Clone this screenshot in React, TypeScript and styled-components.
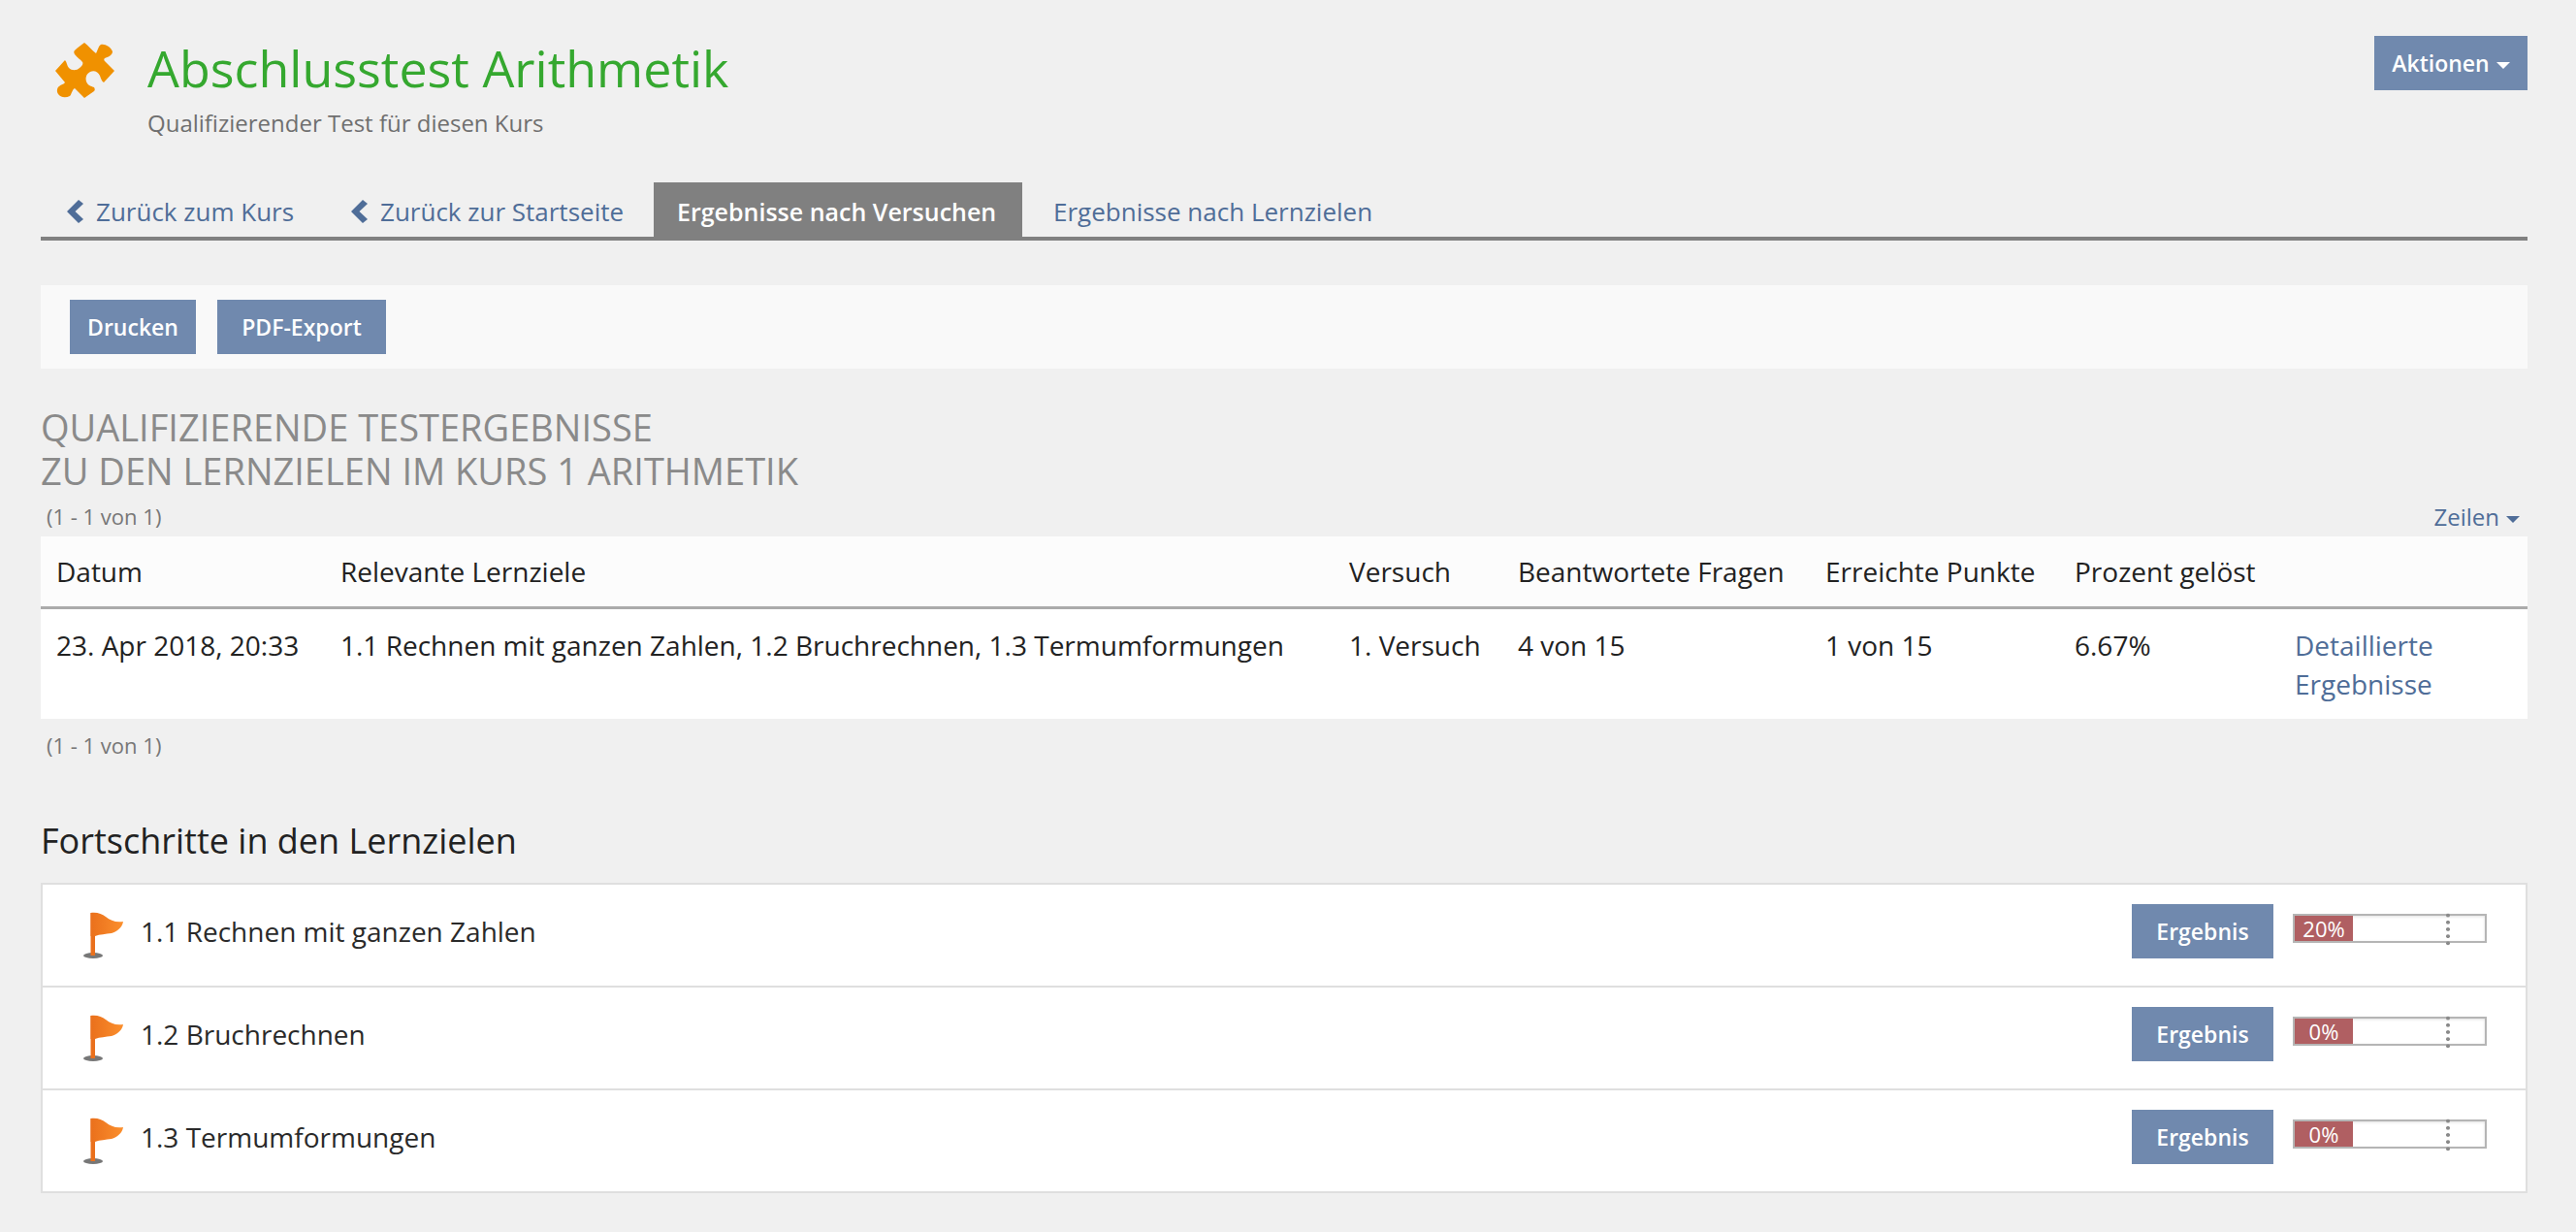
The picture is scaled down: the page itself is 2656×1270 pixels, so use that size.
import React from 'react';
import styled, { createGlobalStyle } from 'styled-components';

const GlobalStyle = createGlobalStyle`
  html, body {
    margin: 0;
    padding: 0;
    background: #f0f0f0;
    font-family: "Open Sans", "Liberation Sans", sans-serif;
    color: #222222;
  }
`;

const Page = styled.div`
  box-sizing: border-box;
  height: 1270px;
  padding: 0 50px 0 42px;
  overflow: hidden;
`;

const Header = styled.header`
  display: flex;
  align-items: flex-start;
  height: 188px;
  box-sizing: border-box;
  padding-top: 36px;
`;

const HeaderIcon = styled.svg`
  width: 63px;
  height: 58px;
  margin: 7px 33px 0 14px;
  flex: none;
`;

const HeaderText = styled.div`
  flex: 1;
`;

const Title = styled.h1`
  margin: 0;
  font-size: 52px;
  line-height: 68px;
  font-weight: 400;
  color: #35a82f;
`;

const Subtitle = styled.div`
  margin-top: 7px;
  font-size: 24px;
  line-height: 32px;
  color: #6f6f6f;
`;

const Button = styled.button<{ $width?: number }>`
  border: 0;
  padding: 0;
  width: ${(p) => (p.$width ? `${p.$width}px` : 'auto')};
  height: 56px;
  flex: none;
  background: #7089ae;
  color: #ffffff;
  font-family: inherit;
  font-size: 23px;
  font-weight: 600;
`;

const ActionsButton = styled(Button)`
  margin-top: 1px;
`;

const Caret = styled.span`
  display: inline-block;
  margin-left: 7px;
  vertical-align: middle;
  border-top: 7px solid currentColor;
  border-left: 7px solid transparent;
  border-right: 7px solid transparent;
`;

const Tabs = styled.nav`
  display: flex;
  height: 60px;
  box-sizing: border-box;
  border-bottom: 4px solid #808080;
`;

const Tab = styled.a<{ $active?: boolean; $width: number; $pad: number }>`
  display: flex;
  align-items: center;
  box-sizing: border-box;
  width: ${(p) => p.$width}px;
  height: 60px;
  padding-left: ${(p) => p.$pad}px;
  font-size: ${(p) => (p.$active ? 25 : 26)}px;
  white-space: nowrap;
  color: ${(p) => (p.$active ? '#ffffff' : '#4f6d98')};
  background: ${(p) => (p.$active ? '#808080' : 'transparent')};
  font-weight: ${(p) => (p.$active ? 600 : 400)};
`;

const Chevron = styled.svg`
  width: 17px;
  height: 24px;
  margin-right: 13px;
  flex: none;
`;

const Toolbar = styled.div`
  display: flex;
  gap: 22px;
  align-items: center;
  height: 86px;
  margin-top: 46px;
  padding-left: 30px;
  background: #f9f9f9;
`;

const Heading = styled.h2`
  margin: 38px 0 0;
  font-size: 38px;
  line-height: 45px;
  font-weight: 400;
  text-transform: uppercase;
  color: #8a8a8a;
`;

const TableMeta = styled.div`
  display: flex;
  justify-content: space-between;
  align-items: center;
  height: 42px;
  padding: 0 8px 0 6px;
  font-size: 22px;
  color: #777777;
`;

const TopMeta = styled(TableMeta)`
  margin-top: 3px;
`;

const BottomMeta = styled(TableMeta)`
  margin-top: 6px;
`;

const RowsLink = styled.span`
  font-size: 24px;
  color: #4f6d98;
`;

const Table = styled.table`
  width: 100%;
  border-collapse: separate;
  border-spacing: 0;
  table-layout: fixed;
  background: #ffffff;
  font-size: 28px;
`;

const Th = styled.th<{ $width?: number }>`
  width: ${(p) => (p.$width ? `${p.$width}px` : 'auto')};
  height: 75px;
  box-sizing: border-box;
  padding: 0 16px;
  text-align: left;
  font-weight: 400;
  background: #fcfcfc;
  border-bottom: 3px solid #ababab;
`;

const Td = styled.td`
  height: 113px;
  box-sizing: border-box;
  padding: 17px 16px 0;
  vertical-align: top;
  line-height: 40px;
`;

const Link = styled.a`
  color: #4f6d98;
`;

const SectionTitle = styled.h3`
  margin: 54px 0 0;
  font-size: 36px;
  line-height: 48px;
  font-weight: 400;
  color: #222222;
`;

const ObjectiveList = styled.div`
  margin-top: 19px;
  border: 2px solid #dfdfdf;
  background: #ffffff;
`;

const ObjectiveRow = styled.div`
  display: flex;
  align-items: center;
  box-sizing: border-box;
  height: 106px;
  padding: 0 40px 8px 42px;
  &:not(:last-child) {
    border-bottom: 2px solid #dfdfdf;
  }
  &:last-child {
    height: 104px;
  }
`;

const Flag = styled.svg`
  width: 41px;
  height: 48px;
  margin: 8px 18px 0 0;
  flex: none;
`;

const ObjectiveName = styled.div`
  flex: 1;
  font-size: 28px;
  color: #2a2a2a;
`;

const ResultButton = styled(Button)`
  margin-right: 20px;
`;

const Progress = styled.div`
  position: relative;
  display: flex;
  box-sizing: border-box;
  width: 200px;
  height: 30px;
  margin-bottom: 6px;
  border: 2px solid #b5b5b5;
  background: #ffffff;
  box-shadow: inset 0 1px 3px rgba(0, 0, 0, 0.12);
`;

const ProgressFill = styled.div`
  width: 60px;
  background: #b05f62;
  color: #ffffff;
  font-size: 22px;
  line-height: 26px;
  text-align: center;
`;

const ProgressMark = styled.div`
  position: absolute;
  left: 156px;
  top: -4px;
  width: 4px;
  height: 36px;
  background: radial-gradient(circle, #8a8a8a 1.7px, transparent 2.2px) 0 0 / 4px 7.2px;
`;

const FlagIcon = () => (
  <Flag viewBox="0 0 41 48">
    <defs>
      <linearGradient id="flagFill" x1="0" x2="1" y1="0" y2="0">
        <stop offset="0" stopColor="#ea701c" />
        <stop offset="1" stopColor="#fb8f2d" />
      </linearGradient>
    </defs>
    <ellipse cx="10" cy="45" rx="10" ry="3" fill="#777777" />
    <path d="M7.5 1 H12 V45 H7.5 Z" fill="#ea701c" />
    <path
      d="M7.5 1 C14 0 19 2 23 5 C28 9 33 11 41 10 C40 16 35 20 29 22 C23 23 17 23 12 25 H7.5 Z"
      fill="url(#flagFill)"
    />
  </Flag>
);

const BackIcon = () => (
  <Chevron viewBox="0 0 17 24">
    <path d="M12 0 L17 4 L8.5 12 L17 20 L12 24 L0 12 Z" fill="#4f6d98" />
  </Chevron>
);

const objectives = [
  { name: '1.1 Rechnen mit ganzen Zahlen', value: '20%' },
  { name: '1.2 Bruchrechnen', value: '0%' },
  { name: '1.3 Termumformungen', value: '0%' },
];

const App: React.FC = () => (
  <Page>
    <GlobalStyle />
    <Header>
      <HeaderIcon viewBox="0 0 63 58">
        <path
          fill="#f09100"
          d="M31 1 C35 4 39 9 43 12 C45 9 45 5 48 3 C52 2 58 5 60 10 C60 14 55 16 52 17 C51 18 51 19 52 20 L62 30 L51 42 C49 41 48 38 47 35 C45 31 41 29 37 31 C33 33 31 38 34 43 C36 46 39 46 41 47 C42 49 42 50 41 51 L31 58 L21 48 C18 50 18 54 16 56 C12 58 7 58 4 54 C2 51 3 47 5 46 C7 44 10 44 11 42 L1 30 L11 19 C13 21 13 25 15 27 C18 30 23 30 26 27 C29 25 30 22 29 21 C27 18 24 17 21 13 C20 11 20 10 21 9 C24 6 28 3 31 1 Z"
        />
      </HeaderIcon>
      <HeaderText>
        <Title>Abschlusstest Arithmetik</Title>
        <Subtitle>Qualifizierender Test für diesen Kurs</Subtitle>
      </HeaderText>
      <ActionsButton $width={158}>
        Aktionen
        <Caret />
      </ActionsButton>
    </Header>

    <Tabs>
      <Tab $width={293} $pad={27}>
        <BackIcon />
        Zurück zum Kurs
      </Tab>
      <Tab $width={339} $pad={27}>
        <BackIcon />
        Zurück zur Startseite
      </Tab>
      <Tab $active $width={380} $pad={24}>Ergebnisse nach Versuchen</Tab>
      <Tab $width={400} $pad={32}>Ergebnisse nach Lernzielen</Tab>
    </Tabs>

    <Toolbar>
      <Button $width={130}>Drucken</Button>
      <Button $width={174}>PDF-Export</Button>
    </Toolbar>

    <Heading>
      Qualifizierende Testergebnisse
      <br />
      zu den Lernzielen im Kurs 1 Arithmetik
    </Heading>

    <TopMeta>
      <span>(1 - 1 von 1)</span>
      <RowsLink>
        Zeilen
        <Caret />
      </RowsLink>
    </TopMeta>

    <Table>
      <thead>
        <tr>
          <Th $width={293}>Datum</Th>
          <Th $width={1040}>Relevante Lernziele</Th>
          <Th $width={174}>Versuch</Th>
          <Th $width={317}>Beantwortete Fragen</Th>
          <Th $width={257}>Erreichte Punkte</Th>
          <Th $width={227}>Prozent gelöst</Th>
          <Th />
        </tr>
      </thead>
      <tbody>
        <tr>
          <Td>23. Apr 2018, 20:33</Td>
          <Td>1.1 Rechnen mit ganzen Zahlen, 1.2 Bruchrechnen, 1.3 Termumformungen</Td>
          <Td>1. Versuch</Td>
          <Td>4 von 15</Td>
          <Td>1 von 15</Td>
          <Td>6.67%</Td>
          <Td>
            <Link>Detaillierte Ergebnisse</Link>
          </Td>
        </tr>
      </tbody>
    </Table>

    <BottomMeta>
      <span>(1 - 1 von 1)</span>
    </BottomMeta>

    <SectionTitle>Fortschritte in den Lernzielen</SectionTitle>

    <ObjectiveList>
      {objectives.map((o) => (
        <ObjectiveRow key={o.name}>
          <FlagIcon />
          <ObjectiveName>{o.name}</ObjectiveName>
          <ResultButton $width={146}>Ergebnis</ResultButton>
          <Progress>
            <ProgressFill>{o.value}</ProgressFill>
            <ProgressMark />
          </Progress>
        </ObjectiveRow>
      ))}
    </ObjectiveList>
  </Page>
);

export default App;
